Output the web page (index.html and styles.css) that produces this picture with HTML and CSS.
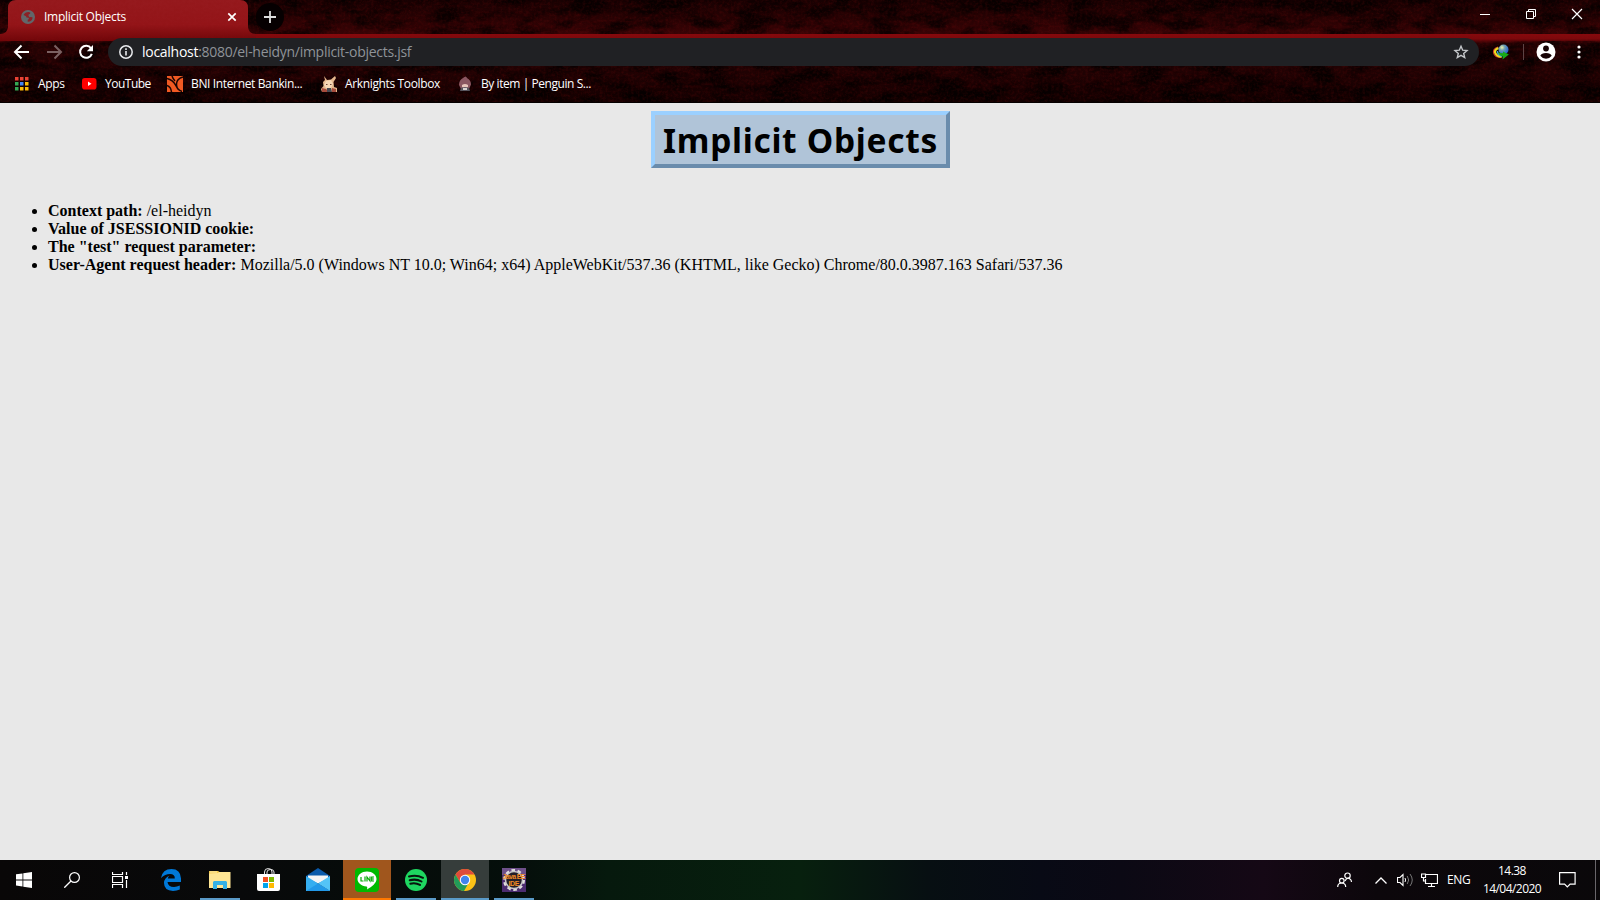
FILE: index.html
```html
<!DOCTYPE html>
<html lang="en">
<head>
<meta charset="utf-8">
<title>Implicit Objects</title>
<link rel="stylesheet" href="styles.css">
</head>
<body>
<header class="browser">
  <svg class="texture" width="1600" height="103">
    <defs>
      <linearGradient id="strip" x1="0" y1="0" x2="0" y2="1"><stop offset="0" stop-color="#180102"/><stop offset=".5" stop-color="#260203"/><stop offset="1" stop-color="#380305"/></linearGradient>
      <linearGradient id="bar" x1="0" y1="0" x2="0" y2="1"><stop offset="0" stop-color="#86090d"/><stop offset=".07" stop-color="#7c080b"/><stop offset=".14" stop-color="#240203"/><stop offset=".55" stop-color="#200203"/><stop offset="1" stop-color="#140001"/></linearGradient>
      <linearGradient id="tabfill" x1="0" y1="0" x2="0" y2="1"><stop offset="0" stop-color="#961a1e"/><stop offset=".6" stop-color="#941519"/><stop offset="1" stop-color="#700609"/></linearGradient>
      <filter id="rock" x="0" y="0" width="100%" height="100%" color-interpolation-filters="sRGB"><feTurbulence type="fractalNoise" baseFrequency=".03 .07" numOctaves="5" seed="8"/><feColorMatrix values="0 0 0 0 0  0 0 0 0 0  0 0 0 0 0  3.4 0 0 0 -1.35"/></filter>
      <filter id="grain" x="0" y="0" width="100%" height="100%" color-interpolation-filters="sRGB"><feTurbulence type="fractalNoise" baseFrequency=".35" numOctaves="3" seed="3"/><feColorMatrix values="0 0 0 0 .55  0 0 0 0 .06  0 0 0 0 .06  0 2 0 0 -.8"/></filter>
    </defs>
    <rect width="1600" height="34" fill="url(#strip)"/>
    <rect y="34" width="1600" height="69" fill="url(#bar)"/>
    <rect width="1600" height="34" filter="url(#rock)" opacity=".7"/>
    <rect y="41" width="1600" height="62" filter="url(#rock)" opacity=".75"/>
    <path d="M0 34C5 34 8 31 8 26V8Q8 0 16 0H240Q248 0 248 8V26C248 31 251 34 256 34V41H0Z" fill="url(#tabfill)"/>
    <rect width="1600" height="103" filter="url(#grain)" opacity=".2"/>
    <rect y="102" width="1600" height="1" fill="#050000"/>
  </svg>
  <div class="tabstrip">
    <div class="tab">
      <svg width="14" height="14" viewBox="0 0 14 14"><circle cx="7" cy="7" r="7" fill="#62666a"/><path d="M7.500 2Q4 2 2.500 5L5 6.200l.5 1.300 2 .2.500 1.300-1.300.8v2q4.300 0 5-4.300L10 7 8.500 7.200 7.600 6V4.500l1.500-.8.2-1.200Z" fill="#8c2025"/></svg>
      <span class="tab-title">Implicit Objects</span>
      <svg class="tab-close" width="10" height="10" viewBox="0 0 10 10"><path d="M1.300 1.300l7.400 7.400M8.700 1.300L1.300 8.700" stroke="#fff" stroke-width="1.700"/></svg>
    </div>
    <div class="newtab"><svg width="12" height="12" viewBox="0 0 12 12"><path d="M6 0v12M0 6h12" stroke="#ddd" stroke-width="1.800"/></svg></div>
    <div class="window-controls">
      <svg width="46" height="28" viewBox="0 0 46 28"><path d="M18 14.500h10" stroke="#fff"/></svg>
      <svg width="46" height="28" viewBox="0 0 46 28"><path d="M18.500 11.500h7v7h-7zM20.500 11V9.500h7v7H26" fill="none" stroke="#fff"/></svg>
      <svg width="46" height="28" viewBox="0 0 46 28"><path d="M18 9l10 10M28 9L18 19" stroke="#fff" stroke-width="1.200"/></svg>
    </div>
  </div>
  <div class="toolbar">
    <svg class="nav" width="32" height="28" viewBox="0 0 32 28"><path d="M23 14H9.500M15.500 7.500L9 14l6.500 6.500" fill="none" stroke="#fff" stroke-width="2"/></svg>
    <svg class="nav" width="32" height="28" viewBox="0 0 32 28"><path d="M9 14H22.500M16.500 7.500L23 14l-6.500 6.500" fill="none" stroke="#7b6162" stroke-width="2"/></svg>
    <svg class="nav" width="32" height="28" viewBox="0 0 32 28"><path d="M21 10.300A6 6 0 1 0 21.800 15.800" fill="none" stroke="#fff" stroke-width="2"/><path d="M23 7v6.200h-6.200Z" fill="#fff"/></svg>
    <div class="omnibox">
      <svg width="14" height="14" viewBox="0 0 14 14"><circle cx="7" cy="7" r="6.200" fill="none" stroke="#e8eaed" stroke-width="1.500"/><path d="M7 6v4.500M7 3.300v1.600" stroke="#e8eaed" stroke-width="1.600"/></svg>
      <span class="url"><b>localhost</b>:8080/el-heidyn/implicit-objects.jsf</span>
      <svg class="star" width="16" height="16" viewBox="0 0 16 16"><path d="M8 2.200l1.700 4 4.300.4-3.300 2.800 1 4.200L8 11.400l-3.700 2.200 1-4.200L2 6.600l4.300-.4Z" fill="none" stroke="#c4c7ca" stroke-width="1.400"/></svg>
    </div>
    <svg class="idm" width="16" height="16" viewBox="0 0 16 16"><defs><radialGradient id="ball" cx=".35" cy=".3" r=".8"><stop offset="0" stop-color="#f0f2a8"/><stop offset=".35" stop-color="#6f9eb0"/><stop offset="1" stop-color="#1556dd"/></radialGradient></defs><path d="M5 3Q-1 5 1 10q2 4 8 3" fill="none" stroke="#cb3828" stroke-width="1.200"/><path d="M5.500 4Q.5 6 2.500 9.500q2 3.500 6 3" fill="none" stroke="#eedb20" stroke-width="2.200"/><path d="M4.500 7Q4 10 9 12.500" fill="none" stroke="#42a9d8" stroke-width="1.600"/><circle cx="10.500" cy="5.500" r="5" fill="url(#ball)"/><path d="M5 8.500l5 .7V7.400L15.900 10.500 9.500 15.500l.3-3Q6.500 12 5 8.500Z" fill="#18a818"/></svg>
    <i class="divider"></i>
    <svg class="avatar" width="20" height="20" viewBox="0 0 20 20"><circle cx="10" cy="10" r="9.500" fill="#fff"/><circle cx="10" cy="6.500" r="2.900" fill="#180304"/><path d="M4.300 13.800Q5.500 11 10 11t5.700 2.800Q13.500 16.800 10 16.800T4.300 13.800Z" fill="#180304"/></svg>
    <svg class="dots" width="4" height="14" viewBox="0 0 4 14"><g fill="#fff"><circle cx="2" cy="2" r="1.600"/><circle cx="2" cy="7" r="1.600"/><circle cx="2" cy="12" r="1.600"/></g></svg>
  </div>
  <nav class="bookmarks">
    <a class="bm apps"><svg width="14" height="14" viewBox="0 0 14 14"><path d="M0 0h3.500v3.500H0zM5 0h3.500v3.500H5zM10 0h3.500v3.500H10z" fill="#ea4335"/><path d="M0 5h3.500v3.500H0zM0 10h3.500v3.500H0z" fill="#34a853"/><path d="M5 5h3.500v3.500H5z" fill="#4285f4"/><path d="M10 5h3.500v3.500H10zM5 10h3.500v3.500H5zM10 10h3.500v3.500H10z" fill="#fbbc05"/></svg><span>Apps</span></a>
    <a class="bm yt"><svg width="15" height="12" viewBox="0 0 15 12"><rect width="14.500" height="11.500" rx="2.800" fill="#f00"/><path d="M6 3.500l3.500 2.200L6 8Z" fill="#fff"/></svg><span>YouTube</span></a>
    <a class="bm bni"><svg width="16" height="16" viewBox="0 0 16 16"><path d="M0 0h16v16H0z" fill="#f15a23"/><path d="M0 2.500Q6 4 8.500 9T15 15.500M16 1Q9.500 3 9.500 8T13 14.500M0 9.500q4 1.500 4.500 6.500M5 0q1 3 3 5" fill="none" stroke="#1b0503" stroke-width="1.500"/></svg><span>BNI Internet Bankin...</span></a>
    <a class="bm ark"><svg width="16" height="16" viewBox="0 0 16 16"><path d="M3 0l3 4 4-.5L14 0l1 2-2.500 4 .5 5 3 1v4H1l-1-3 2.500-3L2 6 4 4Z" fill="#e4b78d"/><path d="M5 5l5-1 2 4-2 4H5L3 9Z" fill="#f6d8b6"/><path d="M5 8.500h1.500M9 8.500h1.500" stroke="#724839"/><path d="M1 12l4 1 3 3H1ZM11 12l4 1v3h-4Z" fill="#a64b3c"/><path d="M6 12h4l1 4H6Z" fill="#474850"/></svg><span>Arknights Toolbox</span></a>
    <a class="bm pen"><svg width="14" height="16" viewBox="0 0 14 16"><path d="M5 2Q8-1 9 2q4 2 4 6.500L11 13H3L1 9q0-5 4-7Z" fill="#8a5660"/><path d="M4 9q3-2 6 0v2l-3 1-3-1Z" fill="#e8c5bb"/><path d="M3 12l4-1 4 1 1 3H2Z" fill="#57545d"/><path d="M5 12h4v2H5Z" fill="#d8d0ce"/></svg><span>By item | Penguin S...</span></a>
  </nav>
</header>
<main class="page">
  <h1 class="title"><span>Implicit Objects</span></h1>
  <ul>
    <li><b>Context path:</b> /el-heidyn</li>
    <li><b>Value of JSESSIONID cookie:</b></li>
    <li><b>The "test" request parameter:</b></li>
    <li><b>User-Agent request header:</b> Mozilla/5.0 (Windows NT 10.0; Win64; x64) AppleWebKit/537.36 (KHTML, like Gecko) Chrome/80.0.3987.163 Safari/537.36</li>
  </ul>
</main>
<footer class="taskbar">
  <div class="sys"><svg width="16" height="16" viewBox="0 0 16 16"><path d="M0 2.300l6.500-.9v6.100H0zM7.300 1.200L16 0v7.500H7.300zM0 8.400h6.500v6.100L0 13.600zM7.300 8.400H16V16l-8.700-1.200z" fill="#fff"/></svg></div>
  <div class="sys"><svg width="16" height="16" viewBox="0 0 16 16"><circle cx="10.500" cy="5.500" r="4.900" fill="none" stroke="#fff" stroke-width="1.200"/><path d="M7 9L.3 15.700" stroke="#fff" stroke-width="1.300"/></svg></div>
  <div class="sys"><svg width="17" height="16" viewBox="0 0 17 16"><path d="M.5 0v2.500h10V0M.5 4.500h10v6H.5zM.5 16v-3.500h10V16M14.500 0v3M14.500 8v8" fill="none" stroke="#fff" stroke-width="1.200"/><path d="M13 4h3v3h-3z" fill="#fff"/></svg></div>
  <div class="apps-row">
    <div class="app"><svg width="20" height="22" viewBox="0 0 20 22"><path d="M0 9Q1.500 0 10.500 0T20 9.500V13H6.500Q7 18 13 18q3 0 5.800-1.400v4Q16 22 12 22 3 21.500 3 14 3 9 8.500 6.500 7 8 6.800 9.500h7Q14 5 9 5 4 5 0 9Z" fill="#0078d7"/></svg></div>
    <div class="app open"><svg width="22" height="18" viewBox="0 0 22 18"><path d="M0 0h9l1.500 1H21v16H0z" fill="#f5c94d"/><path d="M0 2.500L9 2l1-1h11.500v16H0z" fill="#ffe694"/><path d="M1 1h7" stroke="#fff1b4"/><path d="M4 18v-7l1-1h12l1 1v7h-4v-4H8v4Z" fill="#35b1e5"/></svg></div>
    <div class="app store"><svg width="23" height="23" viewBox="0 0 23 23"><path d="M7.500 7V4q0-3.500 3.800-3.500T15 4v3M10 7V4q0-2.500 3.500-2.500T17 4v3" fill="none" stroke="#e8e8e8"/><path d="M0 6h23v15q0 2-2 2H2q-2 0-2-2z" fill="#fff"/><path d="M6 9h5v5H6z" fill="#f25022"/><path d="M12 9h5v5h-5z" fill="#7fba00"/><path d="M6 15h5v5H6z" fill="#00a4ef"/><path d="M12 15h5v5h-5z" fill="#ffb900"/></svg></div>
    <div class="app mail"><svg width="24" height="23" viewBox="0 0 24 23"><path d="M0 8l12-8 12 8v7H0z" fill="#0a5aaa"/><path d="M2 7.500h20v3l-10 5-10-5z" fill="#f4f4f4"/><path d="M0 8l24 15H0z" fill="#35aef0"/><path d="M24 8v15L12 15.500Z" fill="#54c4f7"/><path d="M0 23L12 15.500 24 23Z" fill="#2299e8"/></svg></div>
    <div class="app line"><svg width="24" height="24" viewBox="0 0 24 24"><rect width="24" height="24" rx="4" fill="#00b900"/><path d="M12 3.500c5.300 0 9.500 3.300 9.500 7.500 0 4-4.500 7.500-9.500 10.500.5-2 .2-2.800-.5-3C6.500 18 2.500 15 2.500 11S6.700 3.500 12 3.500Z" fill="#fff"/><path d="M6 9v4h2.500M10 8.500V13.500M12 13.500V9l3 4V8.500M19 9h-2.300v4H19M16.700 11H19" fill="none" stroke="#00a900" stroke-width="1.200"/></svg></div>
    <div class="app open"><svg width="22" height="22" viewBox="0 0 22 22"><circle cx="11" cy="11" r="11" fill="#1ed760"/><path d="M4 7.500q7.500-2.200 14 1.300M4.700 11.300q6.500-1.800 11.800 1.200M5.300 14.700q5-1.500 9.700 1.200" fill="none" stroke="#07160d" stroke-width="2" stroke-linecap="round"/></svg></div>
    <div class="app open active"><svg width="22" height="22" viewBox="0 0 22 22"><circle cx="11" cy="11" r="11" fill="#fbc116"/><path d="M1.500 5.500A11 11 0 0 1 20.500 5.500H11L6.200 13.500Z" fill="#df4b3b"/><path d="M1.500 5.500 6.300 13.700 14 15l-4 7A11 11 0 0 1 1.500 5.500Z" fill="#229b59"/><circle cx="11" cy="11" r="5.200" fill="#fff"/><circle cx="11" cy="11" r="4.200" fill="#4184ed"/></svg></div>
    <div class="app open"><svg width="24" height="24" viewBox="0 0 24 24"><path d="M0 0h24v24H0z" fill="#4c2c70"/><path d="M0 0h24v7H0z" fill="#6e508a"/><circle cx="12" cy="12" r="9.500" fill="none" stroke="#e2e0dd" stroke-width="3" stroke-dasharray="3.500 2.500"/><circle cx="12" cy="12" r="8.500" fill="#221e28" stroke="#c9c7c9" stroke-width="1.500"/><g class="ide"><text x="12" y="11" textLength="23">Java EE</text><text x="12" y="18" textLength="11">IDE</text></g></svg></div>
  </div>
  <div class="tray">
    <svg class="people" width="16" height="16" viewBox="0 0 16 16"><g fill="none" stroke="#fff" stroke-width="1.200"><circle cx="10.500" cy="3.700" r="2.700"/><path d="M8 9q2.500-4.500 5-2 1.500 1 1.500 3"/><circle cx="4.800" cy="8.700" r="2.300"/><path d="M.7 15q0-4 4-4t4 4"/></g></svg>
    <svg class="chev" width="12" height="7" viewBox="0 0 12 7"><path d="M.5 6.500L6 1l5.500 5.500" fill="none" stroke="#fff" stroke-width="1.300"/></svg>
    <svg class="vol" width="16" height="14" viewBox="0 0 16 14"><path d="M.5 4.500H3L6 1.500v11L3 9.500H.5z" fill="none" stroke="#fff" stroke-width="1.100"/><path d="M8 5q1.200 2 0 4" fill="none" stroke="#fff"/><path d="M10.200 3q3 4 0 8M13 1q4.500 6 0 12" fill="none" stroke="#777"/></svg>
    <svg class="net" width="17" height="14" viewBox="0 0 17 14"><path d="M5 1.500h11.500v9H4.500V6M7 13.500h7M10.500 10v3.500M.5 1h4v3.500h-4zM2.500 4.500V8h2" fill="none" stroke="#fff" stroke-width="1.200"/></svg>
    <span class="lang">ENG</span>
    <div class="clock"><span>14.38</span><span class="date">14/04/2020</span></div>
    <svg class="notif" width="17" height="16" viewBox="0 0 17 16"><path d="M.6.6h15.500v11.500h-5L8.300 15 5.600 12.100H.6Z" fill="none" stroke="#fff" stroke-width="1.200"/></svg>
    <i class="desk"></i>
  </div>
</footer>
</body>
</html>
```
FILE: styles.css
```css
* { box-sizing: border-box; }
body { margin: 0; width: 1600px; height: 900px; overflow: hidden; display: flex; flex-direction: column; background: #e8e8e8; }
svg { display: block; flex: none; }
.browser { position: relative; height: 103px; flex: none; font: 12px "Open Sans", "Noto Sans", sans-serif; color: #fff; background: #150001; }
.texture { position: absolute; left: 0; top: 0; }
.tabstrip, .toolbar, .bookmarks { position: relative; display: flex; align-items: center; white-space: nowrap; }
.tabstrip { height: 34px; padding-left: 8px; }
.tab { width: 240px; height: 34px; display: flex; align-items: center; padding: 0 11px 0 13px; }
.tab-title { margin-left: 9px; letter-spacing: -.27px; padding-bottom: 2px; }
.tab-close { margin-left: auto; }
.newtab { width: 28px; height: 28px; margin-left: 8px; border-radius: 50%; background: #060001; display: flex; align-items: center; justify-content: center; }
.window-controls { display: flex; margin-left: auto; align-self: flex-start; }
.toolbar { height: 36px; padding-left: 6px; }
.omnibox { width: 1371px; height: 28px; margin-left: 6px; padding: 0 10px 0 11px; border-radius: 14px; background: #202124; display: flex; align-items: center; }
.url { margin-left: 9px; padding-bottom: 1px; font-size: 14px; letter-spacing: -.28px; color: #8f9398; }
.url b { font-weight: 400; color: #fff; }
.star { margin-left: auto; }
.idm { margin-left: 14px; }
.divider { width: 1px; height: 16px; margin-left: 14px; background: #5d4344; }
.avatar { margin-left: 12px; }
.dots { margin-left: 21px; }
.bookmarks { height: 28px; padding-left: 15px; }
.bm { display: flex; align-items: center; letter-spacing: -.36px; }
.bm svg { margin-right: 8px; }
.bm span { padding-bottom: 1px; }
.apps { width: 67px; }
.apps svg { margin-right: 9px; }
.yt { width: 85px; letter-spacing: -.5px; }
.bni { width: 154px; }
.ark { width: 137px; }
.pen { letter-spacing: -.44px; }
.pen svg { margin-right: 9px; }
.page { flex: 1; padding: 8px; font: 16px/18px "Liberation Serif", "Times New Roman", serif; color: #000; }
.title { width: 299px; height: 57px; margin: 0 auto; border: 4px solid; border-color: #9bd0ff #6a8cac #6a8cac #9bd0ff; background: #b0c4d8; display: flex; align-items: center; justify-content: center; font: bold 33.500px/49px "Noto Sans", Verdana, sans-serif; letter-spacing: .7px; padding: 1px 0 0 1px; white-space: nowrap; }
.page ul { margin: 34px 0 0; padding-left: 40px; }
.taskbar { height: 40px; flex: none; display: flex; background: linear-gradient(90deg, #090707 0, #08090a 15%, #050d0a 28%, #050f0b 33%, #06190d 38%, #07200e 50%, #070f12 58%, #080a15 65%, #0b0914 70%, #150815 79%, #0c070b 86%, #0a080a 100%); color: #fff; font: 12px "Open Sans", "Noto Sans", sans-serif; }
.sys { width: 48px; display: flex; align-items: center; justify-content: center; }
.apps-row { display: flex; gap: 1px; margin-left: 3px; }
.app { width: 48px; height: 40px; display: flex; align-items: center; justify-content: center; }
.open { background: linear-gradient(#5a9ac8, #5a9ac8) center bottom / 40px 2px no-repeat; }
.active { background-size: 48px 2px; background-color: #363d3b; }
.line { background: #a0561d; border-bottom: 2px solid #ff7800; padding-top: 2px; }
.store { padding: 0 2px 1px 0; }
.mail { padding-bottom: 1px; }
.ide { font: bold 7px "Liberation Sans", sans-serif; fill: #f08a24; text-anchor: middle; }
.tray { display: flex; align-items: center; margin-left: auto; }
.chev { margin-left: 22px; }
.vol { margin-left: 10px; }
.net { margin-left: 8px; }
.lang { margin-left: 9px; width: 24px; letter-spacing: -.4px; padding-bottom: 1px; }
.clock { width: 62px; margin-left: 10px; display: flex; flex-direction: column; align-items: center; line-height: 18px; letter-spacing: -.55px; }
.notif { margin-left: 16px; }
.desk { width: 1px; height: 40px; margin: 0 4px 0 19px; background: #69666a; }
```
